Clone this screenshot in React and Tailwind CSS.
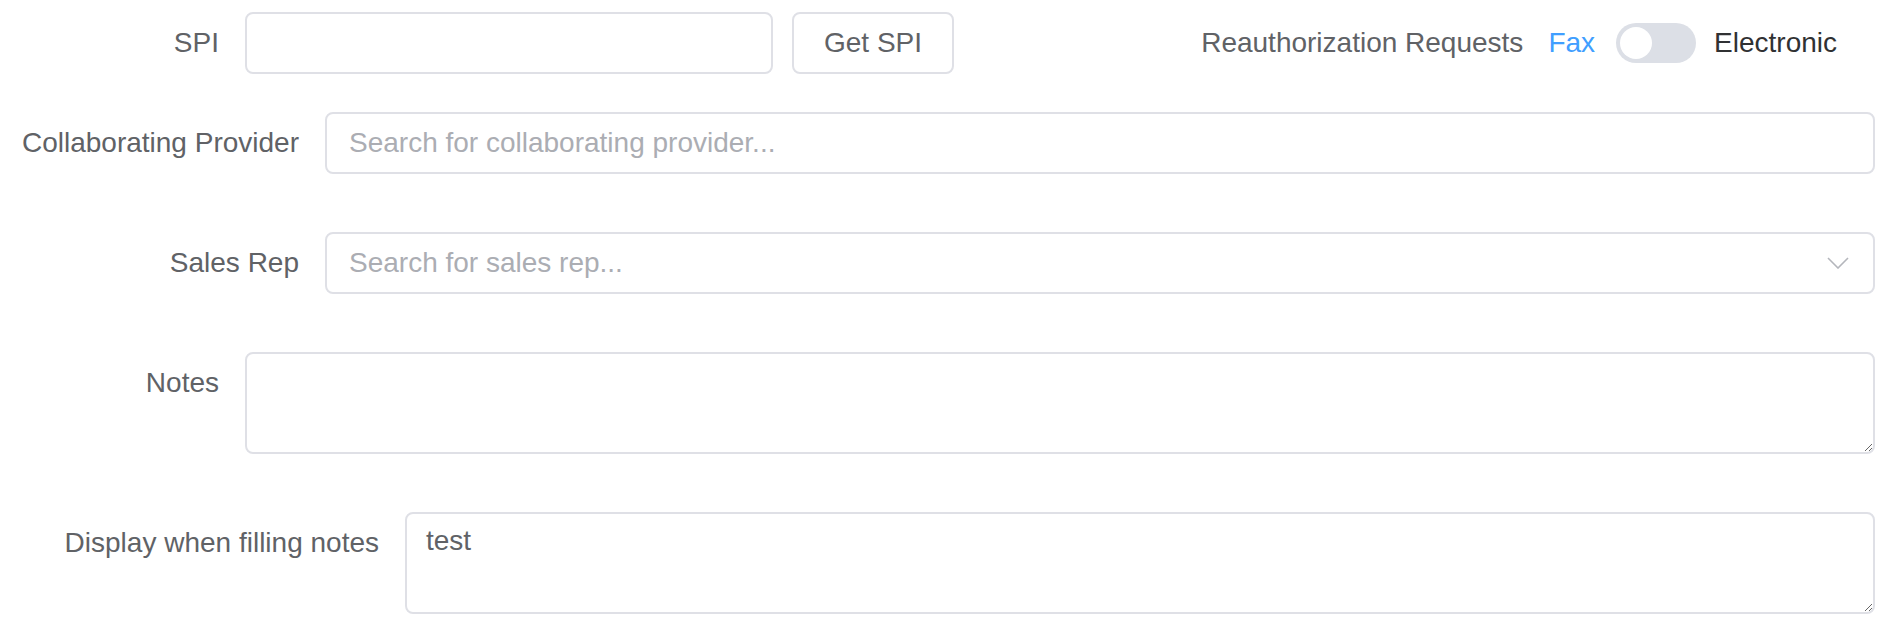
import { useState } from 'react';

function Chevron() {
  return (
    <svg width="22" height="12" viewBox="0 0 22 12" fill="none">
      <polyline points="1,1 11,11 21,1" stroke="#b4b6bc" strokeWidth="1.6" />
    </svg>
  );
}

export default function App() {
  const [electronic, setElectronic] = useState(false);
  const [notes, setNotes] = useState('');
  const [display, setDisplay] = useState('test');

  const field =
    'h-[62px] border-2 border-[#dfe0e6] rounded-[8px] bg-white px-[22px] text-[28px] text-[#606266] placeholder:text-[#abadb3] outline-none';
  const area =
    'h-[102px] border-2 border-[#dfe0e6] rounded-[8px] bg-white px-[19px] pt-[8px] leading-[38px] text-[28px] text-[#606266] outline-none';
  const label = 'shrink-0 h-[62px] flex items-center justify-end pr-[26px] text-[28px] text-[#606266]';

  return (
    <div className="min-h-screen bg-white pt-[12px] pr-[25px] font-['Liberation_Sans',Arial,sans-serif]">
      {/* SPI + reauthorization toggle */}
      <div className="flex items-center h-[62px]">
        <div className={`${label} w-[245px]`}>SPI</div>
        <input className={`${field} w-[528px]`} />
        <button className="ml-[19px] h-[62px] w-[162px] border-2 border-[#dfe0e6] rounded-[8px] bg-white text-[28px] text-[#606266]">
          Get SPI
        </button>
        <div className="ml-auto mr-[38px] flex items-center">
          <span className="text-[28px] text-[#606266]">Reauthorization Requests</span>
          <span className={`ml-[25px] text-[28px] ${electronic ? 'text-[#303133]' : 'text-[#409eff]'}`}>Fax</span>
          <button
            onClick={() => setElectronic(!electronic)}
            className={`ml-[21px] w-[80px] h-[40px] rounded-full p-[4px] flex ${electronic ? 'bg-[#409eff] justify-end' : 'bg-[#dcdfe6] justify-start'}`}
          >
            <span className="w-[32px] h-[32px] rounded-full bg-white" />
          </button>
          <span className={`ml-[18px] text-[28px] ${electronic ? 'text-[#409eff]' : 'text-[#303133]'}`}>Electronic</span>
        </div>
      </div>

      {/* Collaborating provider */}
      <div className="flex mt-[38px]">
        <div className={`${label} w-[325px]`}>Collaborating Provider</div>
        <input className={`${field} flex-1`} placeholder="Search for collaborating provider..." />
      </div>

      {/* Sales rep */}
      <div className="flex mt-[58px]">
        <div className={`${label} w-[325px]`}>Sales Rep</div>
        <div className="relative flex-1">
          <input className={`${field} w-full pr-[70px]`} placeholder="Search for sales rep..." />
          <span className="absolute right-[26px] top-[25px] pointer-events-none">
            <Chevron />
          </span>
        </div>
      </div>

      {/* Notes */}
      <div className="flex mt-[58px]">
        <div className={`${label} w-[245px]`}>Notes</div>
        <textarea className={`${area} flex-1`} value={notes} onChange={(e) => setNotes(e.target.value)} />
      </div>

      {/* Display when filling notes */}
      <div className="flex mt-[58px]">
        <div className={`${label} w-[405px]`}>Display when filling notes</div>
        <textarea className={`${area} flex-1`} value={display} onChange={(e) => setDisplay(e.target.value)} />
      </div>
    </div>
  );
}
